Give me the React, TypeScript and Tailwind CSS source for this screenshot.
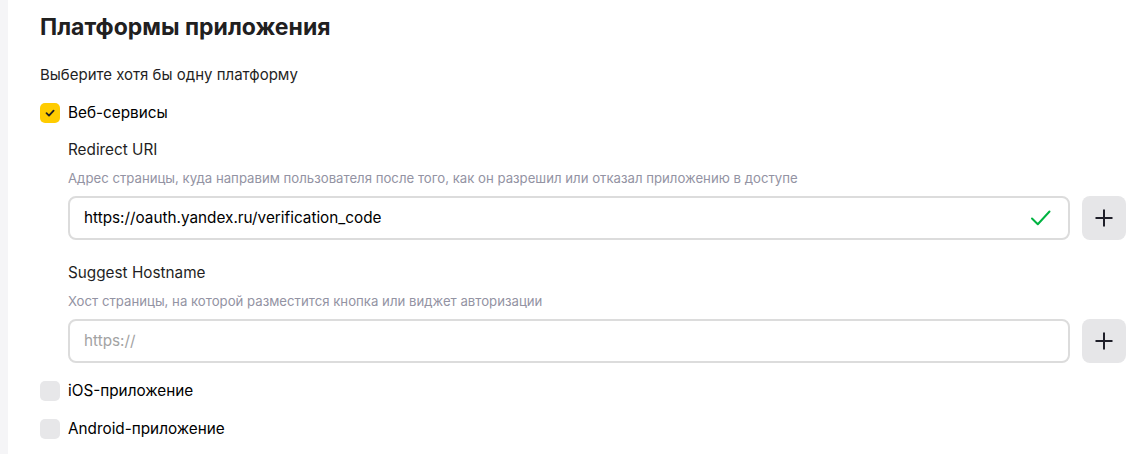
import React from "react";

const font = { fontFamily: "Inter, 'Noto Sans', Roboto, sans-serif" };

function Checkbox({ checked }: { checked?: boolean }) {
  return (
    <div
      className={`w-5 h-5 rounded-[5px] flex items-center justify-center shrink-0 ${
        checked ? "bg-[#ffcc00]" : "bg-[#e7e7e9]"
      }`}
    >
      {checked && (
        <svg width="12" height="12" viewBox="0 0 12 12" fill="none">
          <path d="M2.5 6.2 L5 8.6 L9.6 3.6" stroke="#1f1f24" strokeWidth="1.8" strokeLinecap="round" strokeLinejoin="round" />
        </svg>
      )}
    </div>
  );
}

function PlusButton() {
  return (
    <button className="w-11 h-11 rounded-[8px] bg-[#e6e6e8] flex items-center justify-center shrink-0">
      <svg width="20" height="20" viewBox="0 0 20 20" fill="none">
        <path d="M10 1.5 V18.5 M1.5 10 H18.5" stroke="#1f1f29" strokeWidth="2" />
      </svg>
    </button>
  );
}

function Field({
  label,
  hint,
  value,
  placeholder,
  ok,
}: {
  label: string;
  hint: string;
  value?: string;
  placeholder?: string;
  ok?: boolean;
}) {
  return (
    <div className="flex flex-col">
      <div className="text-[15.3px] leading-5 text-[#1f1f24]">{label}</div>
      <div className="mt-[10px] text-[13.2px] leading-4 text-[#9393a3]">{hint}</div>
      <div className="mt-[10px] flex items-center gap-3 pr-[19px]">
        <div className="flex-1 h-11 rounded-[8px] border-2 border-[#dcdcdc] bg-white flex items-center pl-[14px] pr-[16px]">
          {value ? (
            <span className="text-[15.3px] text-black flex-1">{value}</span>
          ) : (
            <span className="text-[15.3px] text-[#a3a3a3] flex-1">{placeholder}</span>
          )}
          {ok && (
            <svg width="22" height="18" viewBox="0 0 22 18" fill="none">
              <path d="M2 9.5 L7.8 15.2 L19.5 2.5" stroke="#00b341" strokeWidth="2" strokeLinecap="round" strokeLinejoin="round" />
            </svg>
          )}
        </div>
        <PlusButton />
      </div>
    </div>
  );
}

export default function App() {
  return (
    <div className="w-[1145px] h-[454px] flex bg-white overflow-hidden" style={font}>
      <div className="w-2 bg-[#f5f5f7] shrink-0" />
      <div className="flex-1 pl-8 pt-[13px] flex flex-col">
        <h1 className="text-[23px] leading-7 font-bold text-[#21201f]">Платформы приложения</h1>
        <div className="mt-6 text-[15px] leading-5 text-[#1f1f24]">Выберите хотя бы одну платформу</div>
        <div className="mt-[18px] flex items-center gap-2 h-5">
          <Checkbox checked />
          <span className="text-[15.3px] text-black">Веб-сервисы</span>
        </div>
        <div className="pl-7 mt-[17px] flex flex-col">
          <Field
            label="Redirect URI"
            hint="Адрес страницы, куда направим пользователя после того, как он разрешил или отказал приложению в доступе"
            value="https://oauth.yandex.ru/verification_code"
            ok
          />
          <div className="mt-[23px]">
            <Field
              label="Suggest Hostname"
              hint="Хост страницы, на которой разместится кнопка или виджет авторизации"
              placeholder="https://"
            />
          </div>
        </div>
        <div className="mt-[18px] flex items-center gap-2 h-5">
          <Checkbox />
          <span className="text-[15.3px] text-black">iOS-приложение</span>
        </div>
        <div className="mt-[18px] flex items-center gap-2 h-5">
          <Checkbox />
          <span className="text-[15.3px] text-black">Android-приложение</span>
        </div>
      </div>
    </div>
  );
}
